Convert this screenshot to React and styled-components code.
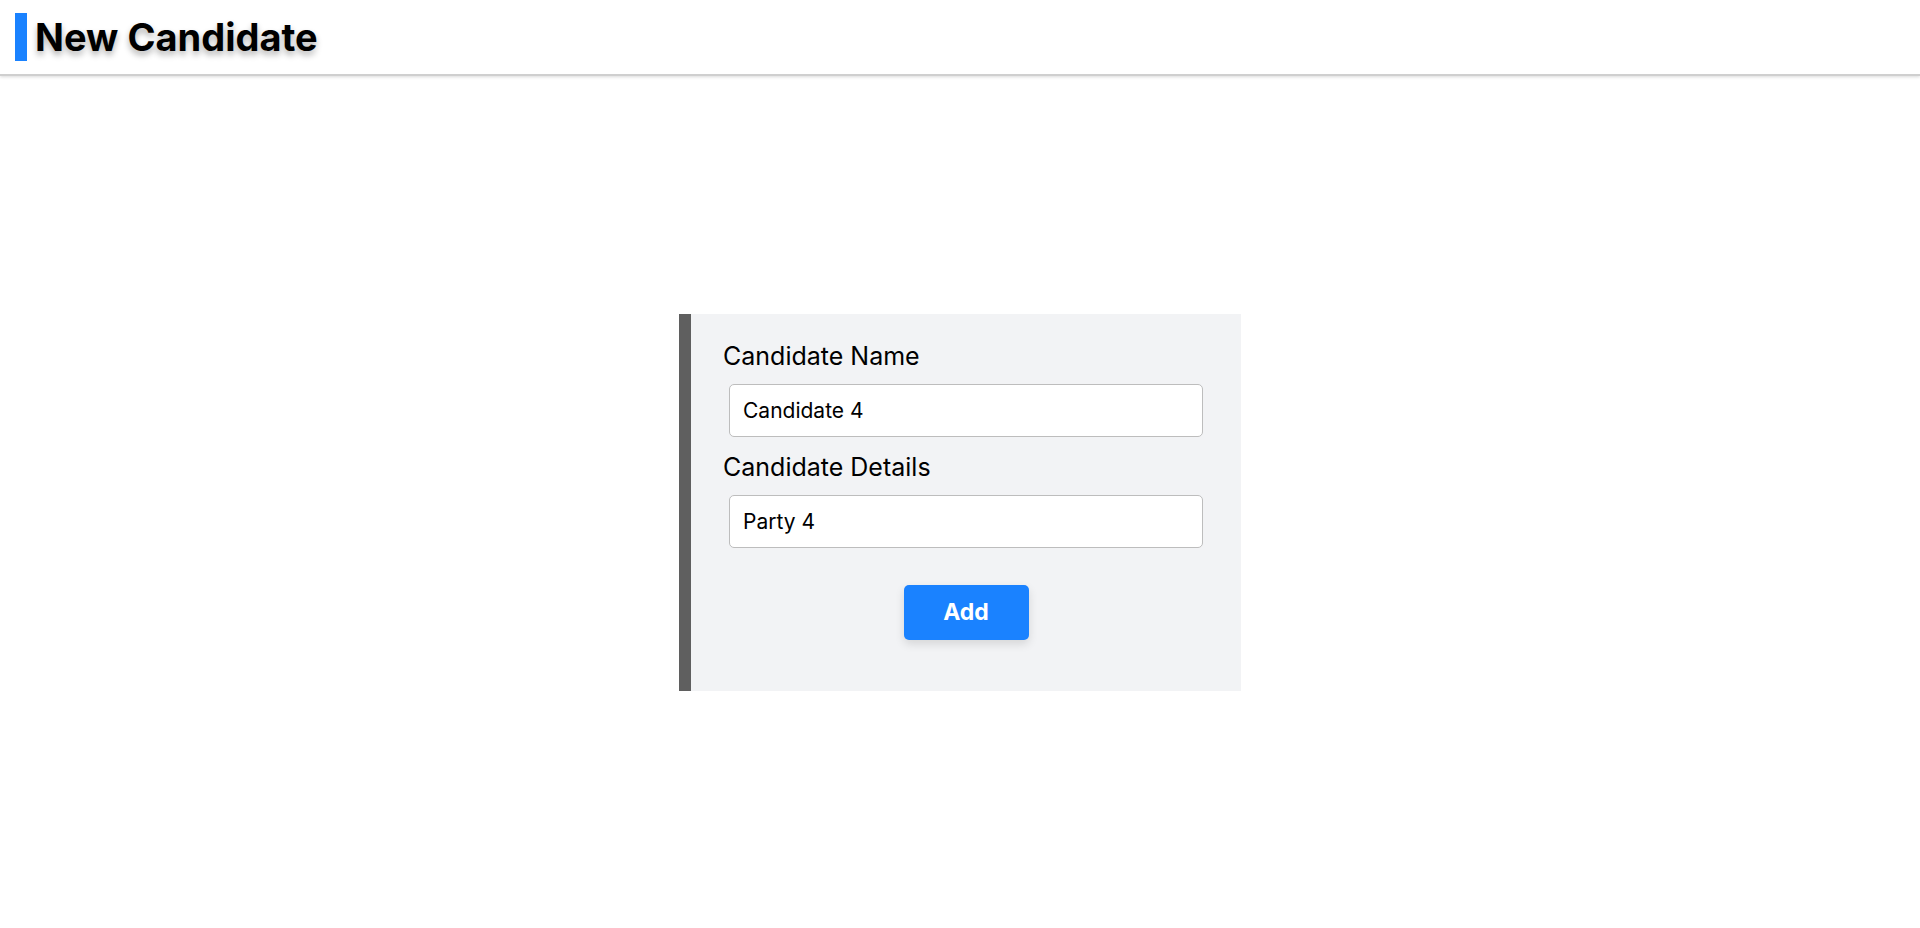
import React, { useState } from "react";
import styled, { createGlobalStyle } from "styled-components";

const GlobalStyle = createGlobalStyle`
  html, body {
    margin: 0;
    padding: 0;
    background: #fff;
    font-family: Inter, "Noto Sans", sans-serif;
  }
  * {
    box-sizing: border-box;
  }
`;

const Page = styled.div`
  display: flex;
  flex-direction: column;
  min-height: 100vh;
`;

const Header = styled.header`
  display: flex;
  align-items: center;
  gap: 8px;
  height: 76px;
  padding: 0 15px;
  border-bottom: 2px solid #cfcfcf;
  box-shadow: 0 1px 3px rgba(0, 0, 0, 0.15);
`;

const AccentBar = styled.div`
  width: 12px;
  height: 48px;
  background: #1a82ff;
`;

const Title = styled.h1`
  margin: 0;
  font-size: 38px;
  font-weight: 700;
  color: #000;
  text-shadow: 0 4px 6px rgba(0, 0, 0, 0.3);
`;

const Main = styled.main`
  flex: 1;
  display: flex;
  align-items: center;
  justify-content: center;
`;

const Card = styled.form`
  display: flex;
  flex-direction: column;
  width: 562px;
  padding: 27px 32px 51px 32px;
  background: #f2f3f5;
  border-left: 12px solid #5f5f5f;
`;

const Label = styled.label`
  font-size: 25px;
  color: #000;
  margin-bottom: 13px;
`;

const Input = styled.input`
  width: calc(100% - 12px);
  height: 53px;
  margin: 0 6px 15px;
  padding: 0 13px;
  border: 1px solid #bdbdbd;
  border-radius: 5px;
  background: #fff;
  font-family: Inter, "Noto Sans", sans-serif;
  font-size: 21px;
  color: #000;
  outline: none;
`;

const AddButton = styled.button`
  align-self: center;
  width: 125px;
  height: 55px;
  margin-top: 22px;
  border: none;
  border-radius: 5px;
  background: #1a82ff;
  color: #fff;
  font-family: Inter, "Noto Sans", sans-serif;
  font-size: 23px;
  font-weight: 700;
  box-shadow: 0 4px 10px rgba(0, 0, 0, 0.12);
  cursor: pointer;
`;

const App = () => {
  const [name, setName] = useState("Candidate 4");
  const [details, setDetails] = useState("Party 4");

  return (
    <Page>
      <GlobalStyle />
      <Header>
        <AccentBar />
        <Title>New Candidate</Title>
      </Header>
      <Main>
        <Card onSubmit={(e) => e.preventDefault()}>
          <Label htmlFor="name">Candidate Name</Label>
          <Input id="name" value={name} onChange={(e) => setName(e.target.value)} />
          <Label htmlFor="details">Candidate Details</Label>
          <Input
            id="details"
            value={details}
            onChange={(e) => setDetails(e.target.value)}
          />
          <AddButton type="submit">Add</AddButton>
        </Card>
      </Main>
    </Page>
  );
};

export default App;
